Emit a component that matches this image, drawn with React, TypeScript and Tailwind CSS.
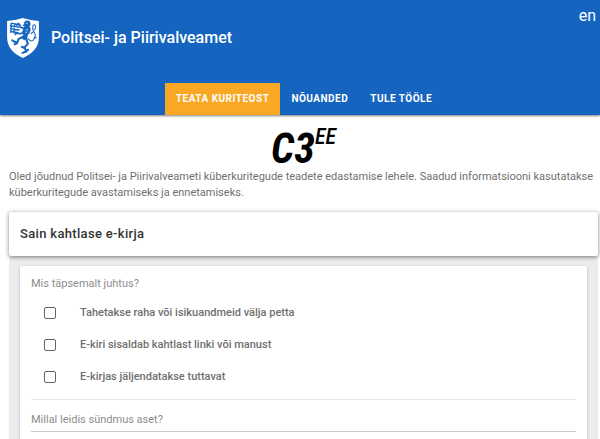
import React from 'react';

const NAV_ITEMS = [
  { label: 'Teata kuriteost', active: true },
  { label: 'Nõuanded', active: false },
  { label: 'Tule tööle', active: false },
];

const OPTIONS = [
  { id: 'money', label: 'Tahetakse raha või isikuandmeid välja petta' },
  { id: 'link', label: 'E-kiri sisaldab kahtlast linki või manust' },
  { id: 'imitation', label: 'E-kirjas jäljendatakse tuttavat' },
];

const Shield: React.FC = () => (
  <svg viewBox="0 0 93 117" className="h-10 w-8 shrink-0" aria-hidden="true">
    <path d="M0 9 Q24 7 46 0 Q69 7 93 9 V58 Q92 97 46 117 Q1 97 0 58Z" fill="#fff" />
    <g fill="none" stroke="#1565c0" strokeLinecap="round" strokeLinejoin="round">
      {/* body and mane */}
      <path d="M51 12 L57 8 L66 10 L68 18 L65 24 L68 33 L66 42 L59 51 L58 61 L50 64 L44 59 L48 50 L45 42 L48 31 L52 24 L46 22 L50 18Z" fill="#1565c0" strokeWidth="2" />
      {/* forelegs */}
      <path d="M51 30 L41 28 L35 19 L27 20 M51 41 L39 46 L28 44 M32 16 L37 19 M24 48 L29 43" strokeWidth="5" />
      <path d="M12 15 L31 19 M9 23 L35 27 M10 31 L35 35 M13 40 L31 43 M12 17 L11 42 M22 17 L20 43" strokeWidth="4" />
      {/* hind legs */}
      <path d="M47 55 L34 61 L29 73 L19 68 M19 68 L15 65 M29 74 L22 77" strokeWidth="6" />
      <path d="M55 59 L61 75 L51 86 L56 98 L45 102 M56 98 L61 93 M51 88 L43 84" strokeWidth="6" />
      {/* tail */}
      <path d="M62 61 Q73 73 79 61 Q86 48 77 38 Q72 30 76 21 Q84 17 83 28 Q83 33 78 35 M78 61 L85 57 M76 41 L70 46" strokeWidth="3" />
    </g>
    <path d="M55 16 L60 15 M54 36 L61 33 M53 44 L60 40 M18 27 L29 29" stroke="#fff" strokeWidth="2" />
  </svg>
);

const Header: React.FC = () => (
  <header className="bg-[#1565c0] text-white shadow-[0_1px_2px_rgba(0,0,0,0.5)]">
    <div className="flex items-start justify-between pr-1 pl-[7px]">
      <a href="#" className="mt-[18px] flex items-center gap-3 text-base leading-5 font-medium">
        <Shield />
        <span>Politsei- ja Piirivalveamet</span>
      </a>
      <a href="#" className="mt-1.5 text-base leading-5">en</a>
    </div>
    <nav className="mt-[25px] flex justify-center pl-2">
      {NAV_ITEMS.map((item) => (
        <a
          key={item.label}
          href="#"
          className={`px-[11px] text-[10px] leading-8 font-bold tracking-wider uppercase ${item.active ? 'bg-[#f9a825]' : ''}`}
        >
          {item.label}
        </a>
      ))}
    </nav>
  </header>
);

const App: React.FC = () => {
  return (
    <div className="min-h-screen overflow-hidden bg-white font-[Roboto,sans-serif] text-[#707070]">
      <Header />

      <main className="pt-2.5 pr-0.5 pl-[9px]">
        <div className="flex h-11 justify-center font-['Roboto_Condensed','Liberation_Sans_Narrow',Roboto,sans-serif] text-black italic">
          <span className="text-[42px] leading-12 font-bold">C3</span>
          <span className="text-[22px] leading-6 font-medium">EE</span>
        </div>

        <p className="text-[11px] leading-4">
          Oled jõudnud Politsei- ja Piirivalveameti küberkuritegude teadete edastamise lehele. Saadud informatsiooni
          kasutatakse küberkuritegude avastamiseks ja ennetamiseks.
        </p>

        <section className="mt-[11px] bg-[#ececec]">
          <h1 className="relative rounded-xs bg-white px-[11px] py-3 text-[13px] leading-5 font-medium tracking-wide text-[#333] shadow-[0_1px_4px_rgba(0,0,0,0.5)]">
            Sain kahtlase e-kirja
          </h1>

          <form className="px-[11px] pt-[10px]">
            <div className="rounded-xs bg-white px-[11px] pt-2 pb-8 shadow-[0_1px_3px_rgba(0,0,0,0.25)]">
              <fieldset className="border-b border-[#e8e8e8] pb-1.5">
                <legend className="mb-[3px] text-[11px] leading-5 text-[#8c8c8c]">Mis täpsemalt juhtus?</legend>
                {OPTIONS.map((option) => (
                  <div key={option.id} className="flex h-8 items-center gap-6 pl-[13px]">
                    <input
                      id={option.id}
                      type="checkbox"
                      className="size-3 appearance-none rounded-xs border border-[#666] bg-white checked:bg-[#1565c0]"
                    />
                    <label htmlFor={option.id} className="text-[11px] leading-4 font-medium">
                      {option.label}
                    </label>
                  </div>
                ))}
              </fieldset>
              <input
                type="text"
                aria-label="Millal leidis sündmus aset?"
                placeholder="Millal leidis sündmus aset?"
                className="mt-2 h-6 w-full border-b border-[#ccc] text-[11px] outline-none placeholder:text-[#8c8c8c]"
              />
            </div>
          </form>
        </section>
      </main>
    </div>
  );
};

export default App;
